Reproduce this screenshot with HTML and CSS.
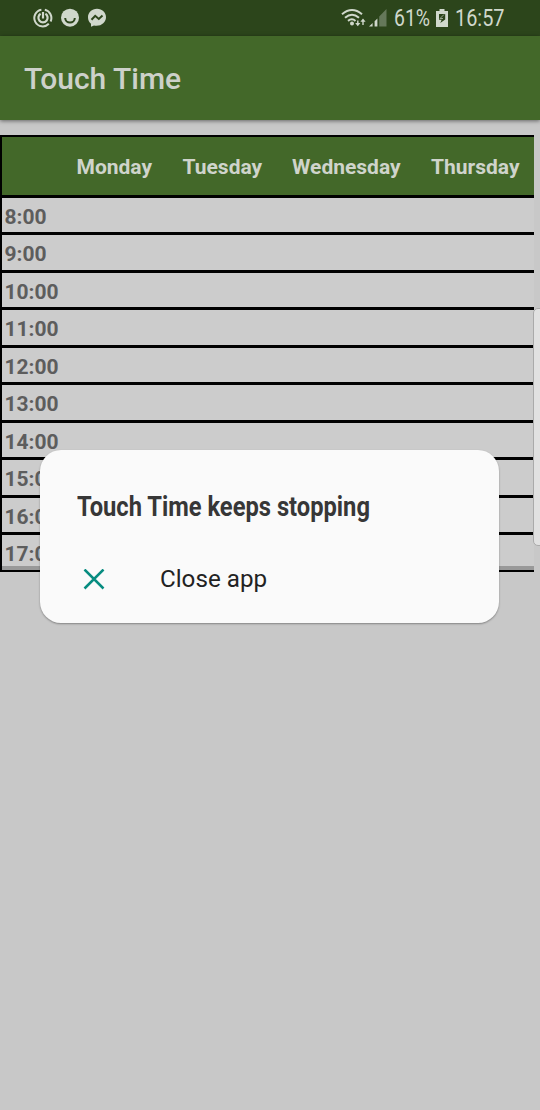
FILE: index.html
```
<!DOCTYPE html>
<html lang="en">
<head>
<meta charset="utf-8">
<title>Touch Time</title>
<link rel="stylesheet" href="styles.css">
</head>
<body>
<div class="screen">
  <header class="status">
    <div class="notifications">
      <svg width="20" height="20" viewBox="0 0 20 20" fill="none" stroke="currentColor" stroke-width="2"><path d="M8.400 1.700A8.400 8.400 0 1 0 15.800 15.800M11.800 1.800A8.400 8.400 0 0 1 17.600 13.500"/><path d="M7.600 5.800A4.600 4.600 0 1 0 12.400 5.800M10 4v6.500" stroke-width="2.200"/></svg>
      <svg width="20" height="20" viewBox="0 0 20 20"><circle cx="10" cy="9.700" r="9" fill="currentColor"/><path d="M5.200 10a4.800 4.500 0 0 0 9.600 0" fill="none" stroke="#2c451b" stroke-width="2"/></svg>
      <svg width="20" height="20" viewBox="0 0 20 20"><path d="M10 .800C4.800.800 1 4.500 1 9.300c0 2.800 1.100 5 3 6.500v3l3-1.200c6.600 1.300 12-2.800 12-8.300C19 4.500 15.200.800 10 .800Z" fill="currentColor"/><path d="m4.500 11.800 3.700-4 3.600 3.200 3.700-3.400" fill="none" stroke="#2c451b" stroke-width="2"/></svg>
    </div>
    <div class="indicators">
      <svg class="wifi" width="26" height="20" viewBox="0 0 26 20" fill="none" stroke="currentColor" stroke-width="2"><path d="M1 6.200Q11-2.200 21 6.200M4 9.700Q11 3.700 18 9.700M7 12.900Q11 9.700 14.500 12.900"/><circle cx="11" cy="15.400" r="2" fill="currentColor" stroke="none"/><path d="M16.800 12.500v4M22 17v-4" stroke-width="1.400"/><path d="M14.200 15h5.200l-2.600 3.300ZM19.400 13.800h5.200L22 10.500Z" fill="currentColor" stroke="none"/></svg>
      <svg class="signal" width="18" height="18" viewBox="0 0 18 18"><path d="M0 17.500 3.600 14v3.500ZM5.600 17.500v-5.300L8.400 9.500v8Z" fill="currentColor"/><path d="M10.200 17.500V7.600L17.500 0v17.500Z" fill="#65785a"/></svg>
      <span class="percent"><span>61%</span></span>
      <svg class="battery" width="12" height="19" viewBox="0 0 12 19"><path d="M3.500 0h5v2H12v16H0V2h3.500Z" fill="currentColor"/><path d="M3 5h6.200v5.400L4.300 14l1.300-3.300H3Z" fill="#2c451b"/><path d="m8 5.500-4 4h3" fill="none" stroke="#98a68f"/></svg>
      <span class="clock"><span>16:57</span></span>
    </div>
  </header>
  <div class="toolbar"><h1>Touch Time</h1></div>
  <main>
    <div class="timetable">
      <div class="days"><span></span><span>Monday</span><span>Tuesday</span><span>Wednesday</span><span>Thursday</span></div>
      <div class="hour">8:00</div>
      <div class="hour">9:00</div>
      <div class="hour">10:00</div>
      <div class="hour">11:00</div>
      <div class="hour">12:00</div>
      <div class="hour">13:00</div>
      <div class="hour">14:00</div>
      <div class="hour">15:00</div>
      <div class="hour">16:00</div>
      <div class="hour last">17:00</div>
    </div>
  </main>
  <div class="edge-handle"></div>
  <section class="dialog" role="dialog" aria-label="Touch Time keeps stopping">
    <h2><span>Touch Time keeps stopping</span></h2>
    <div class="action">
      <svg width="22" height="22" viewBox="0 0 22 22" fill="none" stroke="#078c80" stroke-width="2.500"><path d="m1.500.500 19 19m0-19-19 19"/></svg>
      <span>Close app</span>
    </div>
  </section>
</div>
</body>
</html>
```
FILE: styles.css
```
* { box-sizing: border-box; }
body { margin: 0; }
h1, h2 { margin: 0; }
.screen {
  position: relative;
  width: 540px;
  height: 1110px;
  overflow: hidden;
  background: #c8c8c8;
  font-family: Roboto, "Noto Sans", sans-serif;
}
.status {
  height: 36px;
  display: flex;
  justify-content: space-between;
  padding: 8px 35px 0 33px;
  background: #2c451b;
  color: #d0d8cc;
}
.notifications { display: flex; gap: 7px; }
.indicators { display: flex; }
.indicators svg { flex: none; }
.signal { margin: 1px 0 0 2px; }
.battery { margin-top: 1px; }
.percent, .clock {
  display: block;
  font-size: 23px;
  line-height: 22px;
  white-space: nowrap;
}
.percent { width: 37px; margin: 0 5px 0 7px; }
.clock { width: 50px; margin-left: 7px; }
.percent span, .clock span {
  display: inline-block;
  transform-origin: left;
  transform: scaleX(.845);
}
.clock span { transform: scaleX(.865); }
.toolbar {
  position: relative;
  height: 84px;
  display: flex;
  align-items: center;
  padding: 2px 24px 0;
  background: #436829;
  box-shadow: 0 1px 4px rgba(0, 0, 0, .5);
}
.toolbar h1 { font-size: 30px; line-height: 36px; font-weight: 500; color: #cdd1ca; }
main { padding-top: 15px; }
.timetable {
  width: 534px;
  border: solid #000;
  border-width: 2px 0 2px 2px;
  background: #ccc;
}
.days {
  height: 60.800px;
  display: grid;
  grid-template-columns: 60px 106px 109.500px 139px 1fr;
  align-items: center;
  padding-top: 3px;
  border-bottom: 3px solid #000;
  background: #436829;
  color: #cfd4cb;
  font-size: 21px;
  font-weight: 700;
}
.days span { padding-left: 14.500px; }
.hour {
  height: 37.500px;
  padding: 5.800px 0 0 2.500px;
  border-bottom: 3px solid #000;
  color: #5d5d5d;
  font-size: 21px;
  line-height: 27px;
  font-weight: 700;
}
.last { height: 34.500px; border-bottom: 4px solid #999; }
.edge-handle {
  position: absolute;
  left: 533px;
  top: 308px;
  width: 12px;
  height: 238px;
  border: 1px solid #aaa;
  border-radius: 5px;
  background: #e1e1e1;
}
.dialog {
  position: absolute;
  left: 40px;
  top: 450px;
  width: 459px;
  height: 173px;
  padding: 41px 36px 0 37px;
  border-radius: 21px;
  background: #fafafa;
  box-shadow: 0 1px 2px rgba(0, 0, 0, .35);
}
.dialog h2 {
  font-size: 27px;
  line-height: 32px;
  font-weight: 700;
  color: #373737;
  white-space: nowrap;
}
.dialog h2 span { display: inline-block; transform-origin: left; transform: scaleX(.878); }
.action {
  display: flex;
  align-items: center;
  gap: 55px;
  margin-top: 40px;
  padding-left: 6px;
  font-size: 24.200px;
  line-height: 33px;
  color: #222;
}
```
